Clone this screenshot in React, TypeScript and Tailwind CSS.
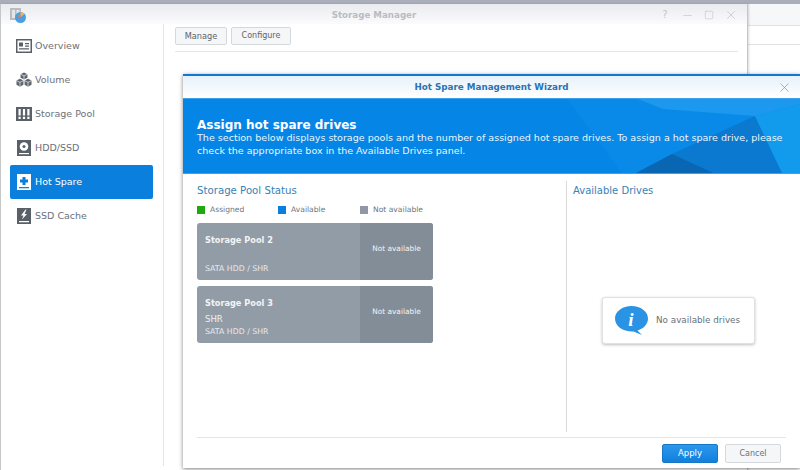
import { X, Minus, Square } from "lucide-react";

const font = "font-['DejaVu_Sans',sans-serif]";

const OverviewIcon = () => (
  <svg width="16" height="16" viewBox="0 0 16 16">
    <path fill="#5a6068" fillRule="evenodd" d="M0 1h16v14H0zM1.500 2.500v11h13v-11z" />
    <path fill="#5a6068" d="M3 4.500h4v4H3zM9 5h4v1.200H9zM9 7.500h4v1.200H9zM3 10.200h10v1.300H3z" />
  </svg>
);

const VolumeIcon = () => (
  <svg width="17" height="16" viewBox="0 0 17 16">
    <path fill="#5f656d" d="M8.500 0l3.700 1.800v3.900L8.500 7.500 4.800 5.700V1.800zM4.200 6.800l3.700 1.800v4.400L4.200 15.200.5 13V8.600zM12.800 6.800l3.700 1.800V13l-3.700 2.200L9.100 13V8.600z" />
    <path fill="none" stroke="#fff" strokeWidth="0.7" d="M4.800 1.800l3.700 1.900 3.700-1.900M8.500 3.700v3.800M.5 8.600l3.700 2 3.700-2M4.200 10.600v4.600M9.100 8.600l3.700 2 3.700-2M12.800 10.600v4.600" />
  </svg>
);

const PoolIcon = () => (
  <svg width="16" height="16" viewBox="0 0 16 16">
    <path fill="#5a6068" d="M0 1h16v14H0z" />
    <path fill="#fff" d="M2.500 3h2.200v6.500H2.500zM6.900 3h2.200v6.500H6.900zM11.300 3h2.200v6.500h-2.200zM2.500 10.800h2.200V13H2.500zM6.900 10.800h2.200V13H6.900zM11.300 10.800h2.200V13h-2.200z" />
  </svg>
);

const HddIcon = () => (
  <svg width="16" height="16" viewBox="0 0 16 16">
    <path fill="#5a6068" d="M1 0h14v16H1z" />
    <circle cx="8" cy="6.500" r="4.300" fill="#fff" />
    <circle cx="8" cy="6.500" r="1.500" fill="#5a6068" />
    <path fill="#fff" d="M3 13h10v1.200H3z" />
  </svg>
);

const SpareIcon = () => (
  <svg width="16" height="16" viewBox="0 0 16 16">
    <path fill="#fff" d="M1 0h14v16H1z" />
    <path fill="#0b7fdc" d="M6.500 3h3v2.500H12v3H9.500V11h-3V8.500H4v-3h2.500zM3 13h10v1.200H3z" />
  </svg>
);

const CacheIcon = () => (
  <svg width="16" height="16" viewBox="0 0 16 16">
    <path fill="#5a6068" d="M1 0h14v16H1z" />
    <path fill="#fff" d="M9.500 1.500L5 7.500h2.500L6 11.500l5-5.500H8.500L10.500 1.500zM3 13h10v1.200H3z" />
  </svg>
);

const AppLogo = () => (
  <svg width="16" height="16" viewBox="0 0 16 16">
    <path fill="#b9bcc2" d="M0 1h11v12H0z" />
    <path fill="#e5e6e8" d="M2 3h3v8H2zM6.500 3h3v8h-3z" />
    <circle cx="10.500" cy="10.500" r="5.500" fill="#4a9fdc" />
    <path fill="#f0b45a" d="M10.500 5a5.500 5.500 0 0 1 4 1.700L10.500 10.500z" />
    <circle cx="9.500" cy="9" r="1.500" fill="#e8786c" />
  </svg>
);

const navItems = [
  { label: "Overview", icon: <OverviewIcon /> },
  { label: "Volume", icon: <VolumeIcon /> },
  { label: "Storage Pool", icon: <PoolIcon /> },
  { label: "HDD/SSD", icon: <HddIcon /> },
  { label: "Hot Spare", icon: <SpareIcon />, active: true },
  { label: "SSD Cache", icon: <CacheIcon /> },
];

const PoolCard = ({ name, raid }: { name: string; raid?: string }) => (
  <div className="flex h-[57px] w-[236px] overflow-hidden rounded-[3px] bg-[#929ca6] text-white">
    <div className="flex flex-1 flex-col px-2 pt-[11px]">
      <div className="text-[8.2px] font-bold leading-[13px] text-[#f3f4f5]">{name}</div>
      <div className="mt-[3px] h-[12px] text-[8.5px] leading-[12px] text-[#eef0f1]">{raid}</div>
      <div className="mt-[1px] text-[7.8px] leading-[12px] text-[#e8eaec]">SATA HDD / SHR</div>
    </div>
    <div className="w-[73px] bg-[#838d98] pt-[20px] text-center text-[7.4px] font-medium leading-[12px] text-[#f3f4f5]">
      Not available
    </div>
  </div>
);

const LegendItem = ({ color, label, width }: { color: string; label: string; width: string }) => (
  <div className={`flex items-center gap-[5px] ${width}`}>
    <span className={`h-2 w-2 ${color}`} />
    <span className="text-[7.6px] leading-[12px] text-[#6f757c]">{label}</span>
  </div>
);

export default function App() {
  return (
    <div className={`relative h-[470px] w-[800px] overflow-hidden bg-white ${font}`}>
      <div className="h-1 bg-[#aaaebb]" />

      {/* desktop strip behind the window */}
      <div className="absolute left-[747px] right-0 top-1 h-[41px] border-b border-[#dfe1e3]">
        <div className="h-[22px] border-b border-[#dfe1e3] bg-[#f6f7f8]" />
      </div>

      {/* storage manager window */}
      <div className="absolute bottom-0 left-0 top-1 w-[748px] border-x border-[#c4c6c9] bg-white shadow-[1px_0_2px_rgba(0,0,0,0.15)]">
        <div className="relative flex h-5 items-center justify-center bg-gradient-to-b from-[#e9ebef] to-[#fbfbfc] pt-[4px]">
          <span className="absolute left-[9px] top-[3px]"><AppLogo /></span>
          <span className="text-[8.7px] font-bold text-[#b9bcc1]">Storage Manager</span>
          <div className="absolute right-[5px] top-[4px] flex items-center text-[#c3c6ca]">
            <span className="flex w-[22px] justify-center text-[10px] leading-[12px]">?</span>
            <span className="flex w-[22px] justify-center"><Minus size={13} strokeWidth={1.3} /></span>
            <span className="flex w-[22px] justify-center"><Square size={10} strokeWidth={1.5} /></span>
            <span className="flex w-[22px] justify-center"><X size={14} strokeWidth={1.3} /></span>
          </div>
        </div>

        <div className="flex h-[442px]">
          <nav className="flex h-full w-[163px] flex-col border-r border-[#e3e4e6] pl-[9px] pr-[10px] pt-[5px]">
            {navItems.map((item) => (
              <div
                key={item.label}
                className={`flex h-[34px] items-center gap-[3px] rounded-[2px] pl-[6px] text-[9.5px] ${
                  item.active ? "bg-[#0a7fdd] text-white" : "text-[#6b7178]"
                }`}
              >
                <span className="flex w-[16px] justify-center">{item.icon}</span>
                {item.label}
              </div>
            ))}
          </nav>
          <div className="flex-1 pl-[11px] pr-[9px] pt-[3px]">
            <div className="flex gap-[4px] border-b border-[#e5e6e8] pb-[6px]">
              <button className="h-[18px] w-[52px] rounded-[2px] border border-[#d6d9dc] bg-[#f4f6f8] text-[8.2px] text-[#5d636b]">
                Manage
              </button>
              <button className="h-[18px] w-[60px] rounded-[2px] border border-[#d6d9dc] bg-[#f4f6f8] text-[8px] text-[#5d636b]">
                Configure
              </button>
            </div>
          </div>
        </div>
      </div>

      {/* wizard window */}
      <div className="absolute left-[183px] top-[74px] flex h-[394px] w-[617px] flex-col border-t-2 border-[#0f78d2] bg-white shadow-[0_1px_4px_rgba(0,0,0,0.5)]">
        <div className="relative flex h-[22px] items-center justify-center bg-gradient-to-b from-[#e6f1fa] to-white pt-[2px]">
          <span className="text-[8.75px] font-bold text-[#2a73b5]">Hot Spare Management Wizard</span>
          <X size={15} strokeWidth={1.1} className="absolute right-[8px] top-[4px] text-[#8a9096]" />
        </div>

        <div className="relative h-[76px] overflow-hidden border-y border-[#3ea0ea] bg-[#0585e6] pl-[14px] pt-[19px] text-white">
          <svg className="absolute inset-0" width="617" height="76" viewBox="0 0 617 76">
            <path fill="#098ae9" d="M384 0L440 76H617V0z" />
            <path fill="#1c99ee" d="M455 0H617V5L572 17 480 10z" />
            <path fill="#0a79cf" d="M572 17L489 55 535 76H600z" />
            <path fill="#0866b2" d="M489 55L449 76H535z" />
            <path fill="#129bec" d="M572 17L617 5V76H600z" />
          </svg>
          <div className="relative">
            <div className="text-[12px] font-bold leading-[14px]">Assign hot spare drives</div>
            <p className="w-[600px] text-[9.55px] leading-[12.500px] text-[#eaf5fd]">
              The section below displays storage pools and the number of assigned hot spare drives. To assign a hot spare drive, please check the appropriate box in the Available Drives panel.
            </p>
          </div>
        </div>

        <div className="flex h-[258px]">
          <div className="mt-[7px] w-[384px] border-r border-[#d9dbdd] pl-[14px] pt-[3px]">
            <div className="text-[10.2px] leading-[14px] text-[#3a7fb5]">Storage Pool Status</div>
            <div className="mt-[6px] flex h-[12px]">
              <LegendItem color="bg-[#1fa80f]" label="Assigned" width="w-[81px]" />
              <LegendItem color="bg-[#0a7fdd]" label="Available" width="w-[82px]" />
              <LegendItem color="bg-[#8f98a3]" label="Not available" width="w-[70px]" />
            </div>
            <div className="mt-[7px] flex flex-col gap-[6px]">
              <PoolCard name="Storage Pool 2" />
              <PoolCard name="Storage Pool 3" raid="SHR" />
            </div>
          </div>
          <div className="relative mt-[7px] flex-1 pl-[6px] pt-[3px]">
            <div className="text-[10px] leading-[14px] text-[#3a7fb5]">Available Drives</div>
            <div className="absolute left-[35px] top-[116px] flex h-[47px] w-[153px] items-center gap-[8px] rounded-[3px] border border-[#e0e1e3] bg-white pl-[12px] shadow-[0_1px_3px_rgba(0,0,0,0.25)]">
              <svg width="33" height="29" viewBox="0 0 33 29">
                <path fill="#2b93e4" d="M16.500 0C25.600 0 33 5.500 33 12.500c0 6-5 10.500-10.500 12L27 29l-8.500-3.500C8.500 26 0 20.500 0 12.500 0 5.500 7.400 0 16.500 0z" />
                <text x="16" y="20" textAnchor="middle" fontSize="19" fontWeight="700" fontStyle="italic" fill="#fff" fontFamily="Liberation Serif, serif">i</text>
              </svg>
              <span className="text-[8.8px] text-[#6b7178]">No available drives</span>
            </div>
          </div>
        </div>

        <div className="mx-[14px] mt-[5px] flex justify-end gap-[7px] border-t border-[#e3e4e6] pr-[5px] pt-[6px]">
          <button className="h-[19px] w-[56px] rounded-[2px] border border-[#1878c8] bg-gradient-to-b from-[#2b97ec] to-[#0f80dc] text-[8.5px] text-white">
            Apply
          </button>
          <button className="h-[19px] w-[56px] rounded-[2px] border border-[#d6d9dc] bg-[#f4f6f8] text-[8px] text-[#6b7178]">
            Cancel
          </button>
        </div>
      </div>
    </div>
  );
}
